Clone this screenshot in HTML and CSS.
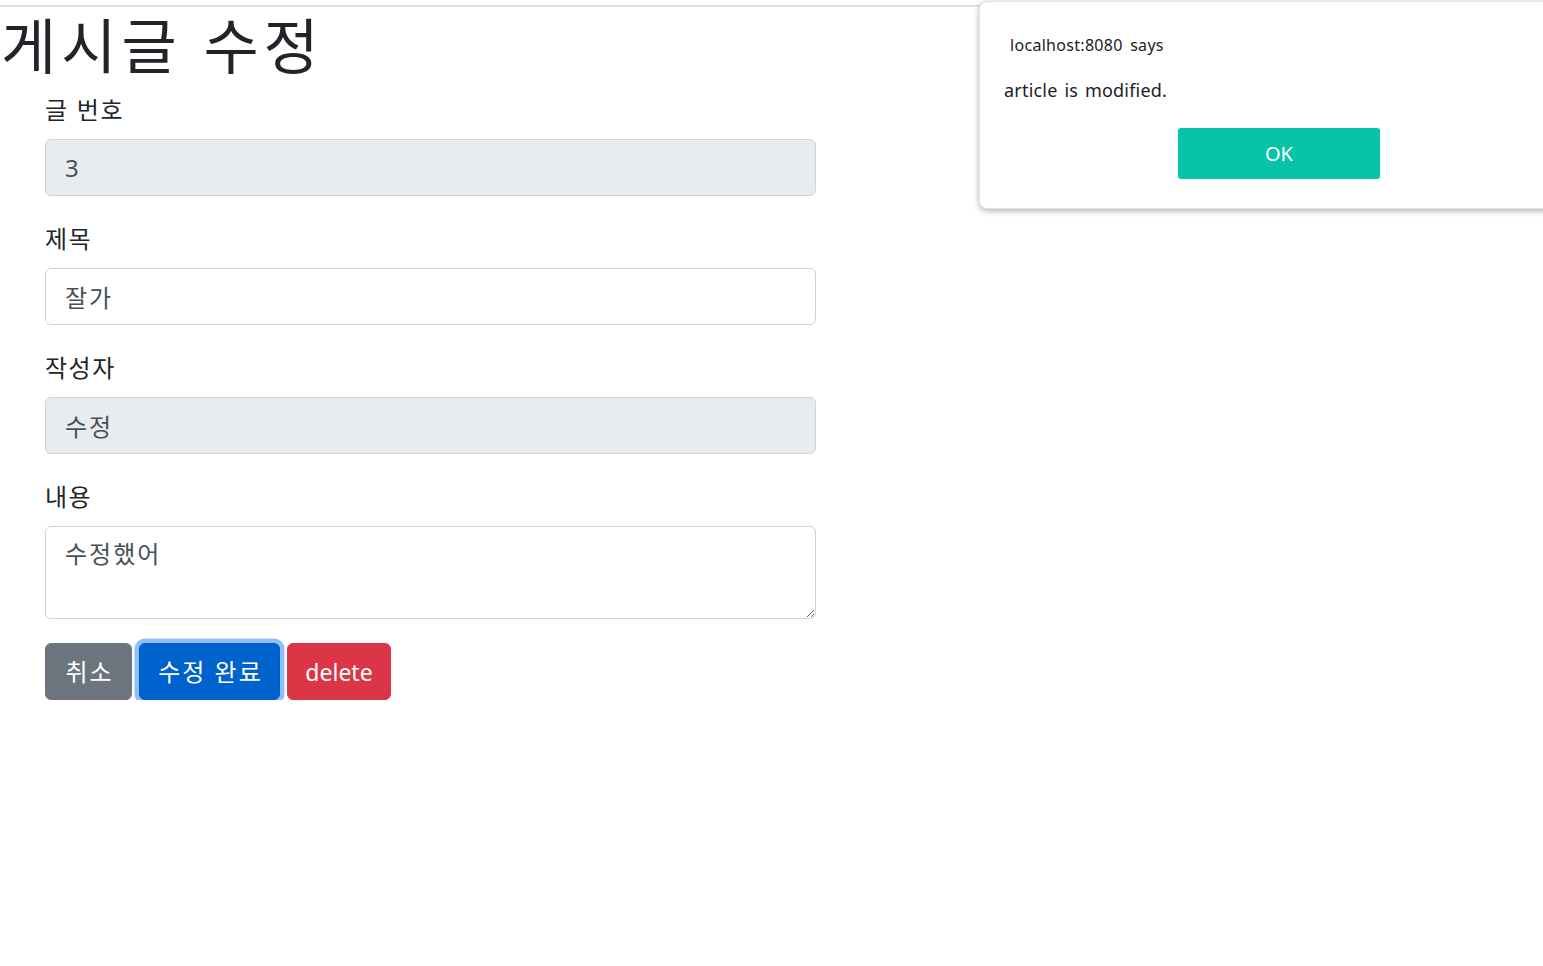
FILE: index.html
```html
<!DOCTYPE html>
<html lang="ko">

<head>
    <title>게시글 수정</title>
    <meta charset="utf-8">
    <meta name="viewport" content="width=device-width, initial-scale=1">
    <link rel="stylesheet" href="styles.css">
</head>

<body>
    <div class="top-rule"></div>
    <h1 class="page-title">게시글 수정</h1>

    <form class="edit-form">
        <div class="form-group">
            <label for="id">글 번호</label>
            <input type="text" id="id" class="form-control" value="3" readonly>
        </div>
        <div class="form-group">
            <label for="title">제목</label>
            <input type="text" id="title" class="form-control" value="잘가">
        </div>
        <div class="form-group">
            <label for="writer">작성자</label>
            <input type="text" id="writer" class="form-control" value="수정" readonly>
        </div>
        <div class="form-group">
            <label for="content">내용</label>
            <textarea id="content" class="form-control" rows="2">수정했어</textarea>
        </div>
        <div class="buttons">
            <button type="button" class="btn btn-secondary">취소</button>
            <button type="button" class="btn btn-primary focused">수정 완료</button>
            <button type="button" class="btn btn-danger">delete</button>
        </div>
    </form>

    <!-- browser alert -->
    <div class="alert-box">
        <p class="alert-origin">localhost:8080 says</p>
        <p class="alert-msg">article is modified.</p>
        <div class="alert-actions">
            <button type="button" class="alert-ok">OK</button>
        </div>
    </div>
</body>

</html>
```

FILE: styles.css
```css
* {
    margin: 0;
    padding: 0;
    box-sizing: border-box;
}

body {
    margin: 0;
    background-color: #fff;
    color: #212529;
    font-family: "Noto Sans", "Noto Sans CJK KR", sans-serif;
    font-size: 24px;
    line-height: 1.5;
}

.top-rule {
    margin-top: 5px;
    height: 2px;
    background-color: #dee2e6;
}

.page-title {
    font-family: "Noto Sans CJK KR", sans-serif;
    font-weight: 400;
    font-size: 60px;
    line-height: 72px;
    letter-spacing: 5px;
    padding-left: 1px;
    margin-bottom: 12px;
}

.edit-form {
    margin-left: 45px;
    width: 771px;
}

.form-group {
    margin-bottom: 24px;
}

.form-group label {
    display: inline-block;
    margin-bottom: 12px;
    font-family: "Noto Sans CJK KR", sans-serif;
    line-height: 36px;
    letter-spacing: 1.5px;
}

.form-control {
    display: block;
    width: 100%;
    height: 57px;
    padding: 9px 18px 9px 19px;
    font-family: "Noto Sans", "Noto Sans CJK KR", sans-serif;
    font-size: 24px;
    line-height: 36px;
    letter-spacing: 2px;
    color: #495057;
    background-color: #fff;
    border: 1.5px solid #ced4da;
    border-radius: 6px;
    outline: none;
}

.form-control[readonly] {
    background-color: #e9ecef;
}

textarea.form-control {
    height: 93px;
    resize: vertical;
}

.buttons {
    display: flex;
    gap: 7px;
}

.btn {
    height: 57px;
    padding: 9px 0;
    font-family: "Noto Sans", "Noto Sans CJK KR", sans-serif;
    font-size: 24px;
    line-height: 36px;
    letter-spacing: 2px;
    text-indent: 2px;
    color: #fff;
    border: 1.5px solid transparent;
    border-radius: 6px;
    cursor: pointer;
}

.btn-secondary {
    background-color: #6c757d;
    border-color: #6c757d;
    width: 87px;
}

.btn-primary {
    background-color: #0062cc;
    border-color: #005cbf;
    width: 141px;
}

.btn-primary.focused {
    box-shadow: 0 0 0 4.5px #8cc0fb;
}

.btn-danger {
    background-color: #dc3545;
    border-color: #dc3545;
    width: 104px;
    letter-spacing: 0;
    text-indent: 0;
    font-size: 23px;
}

/* alert dialog */
.alert-box {
    position: absolute;
    top: 1px;
    left: 979px;
    width: 600px;
    height: 208px;
    background-color: #fff;
    border: 1px solid #e4e4e4;
    border-radius: 8px;
    box-shadow: 0 2px 6px rgba(0, 0, 0, 0.3);
    font-family: "Noto Sans", "Noto Sans CJK KR", sans-serif;
    color: #202124;
}

.alert-origin {
    font-size: 16px;
    line-height: 22px;
    letter-spacing: 0.3px;
    word-spacing: 3px;
    margin: 32px 0 0 30px;
}

.alert-msg {
    font-size: 18px;
    line-height: 24px;
    letter-spacing: 0.2px;
    word-spacing: 2px;
    margin: 22px 0 0 24px;
}

.alert-actions {
    margin: 26px 0 0 198px;
}

.alert-ok {
    width: 202px;
    height: 51px;
    background-color: #07c4a8;
    color: #fff;
    border: none;
    border-radius: 3px;
    font-family: "Noto Sans", sans-serif;
    font-size: 20px;
}
```
